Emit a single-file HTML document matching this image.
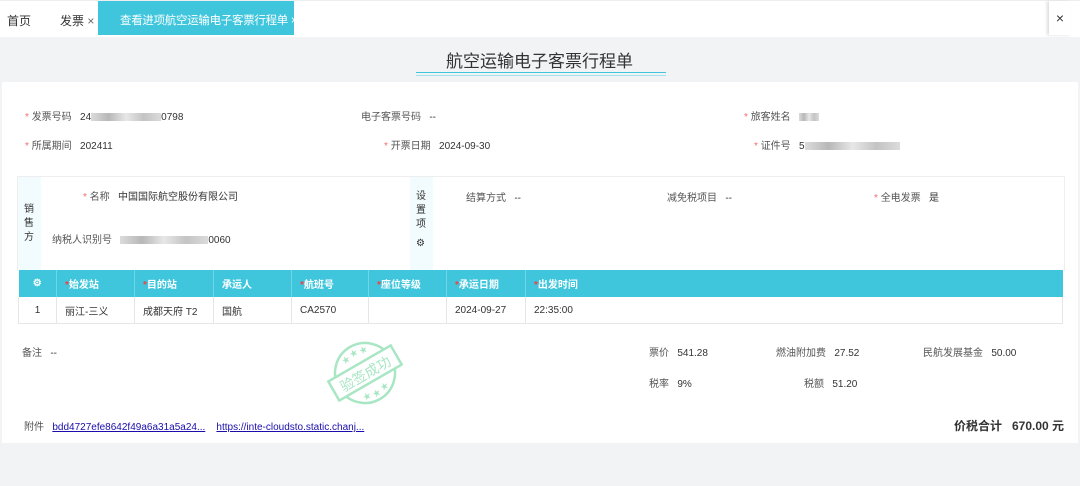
<!DOCTYPE html><html><head><meta charset="utf-8"><style>
body{margin:0;width:1080px;height:486px;background:#f2f3f5;font-family:"Liberation Sans","Noto Sans CJK SC",sans-serif;font-size:10px;color:#333;position:relative;overflow:hidden}
.a{position:absolute;white-space:nowrap}
.r{color:#f56c6c}
.lab{color:#555}
.card{position:absolute;left:2px;top:82px;width:1076px;height:361px;background:#fff}
.blur{display:inline-block;height:8px;background:linear-gradient(90deg,#ccc,#999,#ddd,#aaa,#ccc);vertical-align:middle;opacity:.7}
table{border-collapse:collapse;position:absolute;left:18px;top:270px;width:1045px;font-size:10px;table-layout:fixed}
th{background:#3fc6dd;color:#fff;height:25px;text-align:left;padding-left:8px;font-weight:bold;border-right:1px solid #6dd6e8}
th .r{color:#e8434a}
td{height:24px;border:1px solid #e6e6e6;padding-left:8px;border-top:none}
</style></head><body>
<div class="a" style="left:0;top:0;width:1080px;height:36px;background:#fff;border-top:1px solid #eee"></div>
<div class="a" style="left:7px;top:12px;font-size:12px">首页</div>
<div class="a" style="left:60px;top:12px;font-size:12px">发票 <span style="color:#666">×</span></div>
<div class="a" style="left:98px;top:1px;width:196px;height:34px;background:#3fc6dd"></div>
<div class="a" style="left:120px;top:12px;font-size:11.5px;letter-spacing:-0.3px;color:#fff">查看进项航空运输电子客票行程单 ×</div>
<div class="a" style="left:1049px;top:1px;width:22px;height:34px;background:#fff;box-shadow:-2px 0 3px #ddd;text-align:center;line-height:34px;font-size:14px">×</div>
<div class="card"></div>
<div class="a" style="left:446px;top:47px;font-size:17px;color:#333">航空运输电子客票行程单</div>
<div class="a" style="left:416px;top:72px;width:250px;height:1px;background:#3fc6dd"></div>
<div class="a" style="left:416px;top:75px;width:250px;height:1px;background:#a0e3ee"></div>

<div class="a" style="left:25px;top:108px"><span class="r">*</span> <span class="lab">发票号码</span>&nbsp;&nbsp; 24<span class="blur" style="width:70px"></span>0798</div>
<div class="a" style="left:361px;top:108px"><span class="lab">电子客票号码</span>&nbsp;&nbsp; --</div>
<div class="a" style="left:744px;top:108px"><span class="r">*</span> <span class="lab">旅客姓名</span>&nbsp;&nbsp; <span class="blur" style="width:20px"></span></div>
<div class="a" style="left:25px;top:137px"><span class="r">*</span> <span class="lab">所属期间</span>&nbsp;&nbsp; 202411</div>
<div class="a" style="left:384px;top:137px"><span class="r">*</span> <span class="lab">开票日期</span>&nbsp;&nbsp; 2024-09-30</div>
<div class="a" style="left:754px;top:137px"><span class="r">*</span> <span class="lab">证件号</span>&nbsp;&nbsp; 5<span class="blur" style="width:95px"></span></div>

<div class="a" style="left:17px;top:176px;width:1046px;height:94px;border:1px solid #eee;border-bottom:none"></div>
<div class="a" style="left:18px;top:177px;width:23px;height:93px;background:#f2fbfd"></div>
<div class="a" style="left:24px;top:203px;line-height:14px;white-space:normal;width:10px">销售方</div>
<div class="a" style="left:410px;top:177px;width:23px;height:93px;background:#f2fbfd"></div>
<div class="a" style="left:416px;top:190px;line-height:14px;white-space:normal;width:10px">设置项</div>
<div class="a" style="left:416px;top:238px;font-size:10px">⚙</div>
<div class="a" style="left:83px;top:188px"><span class="r">*</span> <span class="lab">名称</span>&nbsp;&nbsp; 中国国际航空股份有限公司</div>
<div class="a" style="left:52px;top:231px"><span class="lab">纳税人识别号</span>&nbsp;&nbsp; <span class="blur" style="width:88px"></span>0060</div>
<div class="a" style="left:466px;top:189px"><span class="lab">结算方式</span>&nbsp;&nbsp; --</div>
<div class="a" style="left:667px;top:189px"><span class="lab">减免税项目</span>&nbsp;&nbsp; --</div>
<div class="a" style="left:874px;top:189px"><span class="r">*</span> <span class="lab">全电发票</span>&nbsp;&nbsp; 是</div>

<table><colgroup><col style="width:38px"><col style="width:78px"><col style="width:79px"><col style="width:78px"><col style="width:77px"><col style="width:78px"><col style="width:79px"><col></colgroup>
<tr><th style="text-align:center;padding:0">⚙</th><th><span class="r">*</span>始发站</th><th><span class="r">*</span>目的站</th><th>承运人</th><th><span class="r">*</span>航班号</th><th><span class="r">*</span>座位等级</th><th><span class="r">*</span>承运日期</th><th style="border:none"><span class="r">*</span>出发时间</th></tr>
<tr><td style="text-align:center;padding:0">1</td><td>丽江-三义</td><td>成都天府 T2</td><td>国航</td><td>CA2570</td><td></td><td>2024-09-27</td><td>22:35:00</td></tr></table>

<div class="a" style="left:22px;top:344px"><span class="lab">备注</span>&nbsp;&nbsp; --</div>
<svg class="a" style="left:325px;top:333px" width="80" height="80" viewBox="0 0 80 80"><g transform="rotate(-30 40 40)" fill="none" stroke="#a8e6c4" stroke-width="2.5"><circle cx="40" cy="40" r="30"/><rect x="4" y="29" width="72" height="22" fill="#fff"/></g><g fill="#a8e6c4" font-size="8" text-anchor="middle" transform="rotate(-30 40 40)"><text x="30" y="22">★</text><text x="40" y="20">★</text><text x="50" y="22">★</text><text x="30" y="64">★</text><text x="40" y="66">★</text><text x="50" y="64">★</text></g><text x="40" y="46" font-size="14" fill="#a8e6c4" text-anchor="middle" transform="rotate(-30 40 40)" font-family="Noto Sans CJK SC">验签成功</text></svg>
<div class="a" style="left:649px;top:344px"><span class="lab">票价</span>&nbsp;&nbsp; 541.28</div>
<div class="a" style="left:776px;top:344px"><span class="lab">燃油附加费</span>&nbsp;&nbsp; 27.52</div>
<div class="a" style="left:923px;top:344px"><span class="lab">民航发展基金</span>&nbsp;&nbsp; 50.00</div>
<div class="a" style="left:649px;top:375px"><span class="lab">税率</span>&nbsp;&nbsp; 9%</div>
<div class="a" style="left:804px;top:375px"><span class="lab">税额</span>&nbsp;&nbsp; 51.20</div>
<div class="a" style="left:24px;top:418px"><span class="lab">附件</span>&nbsp;&nbsp; <span style="color:#1a0dab;text-decoration:underline">bdd4727efe8642f49a6a31a5a24...</span>&nbsp;&nbsp;&nbsp; <span style="color:#1a0dab;text-decoration:underline">https://inte-cloudsto.static.chanj...</span></div>
<div class="a" style="left:954px;top:417px;font-size:12px;font-weight:bold">价税合计 &nbsp; 670.00 元</div>
</body></html>
